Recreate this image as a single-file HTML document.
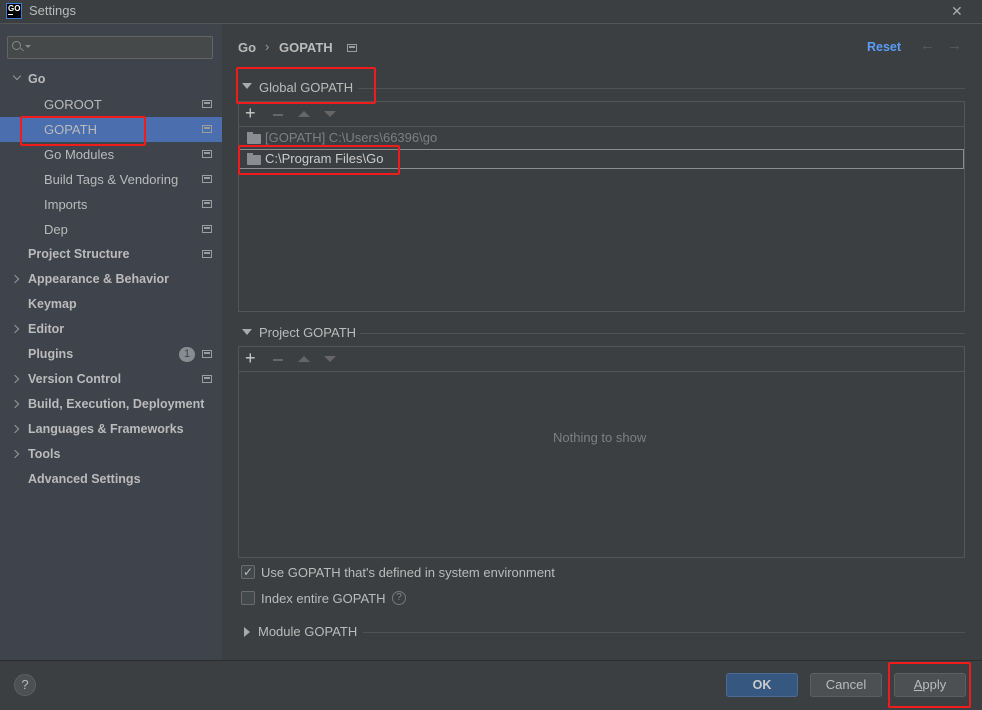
<!DOCTYPE html><html><head><style>
*{box-sizing:border-box;margin:0;padding:0}
body{width:982px;height:710px;background:#3c3f41;font-family:"Liberation Sans",sans-serif;color:#bbbbbb;font-size:13px;position:relative;overflow:hidden}
.a{position:absolute;white-space:nowrap}
.side{position:absolute;left:0;top:24px;width:222px;height:636px;background:#3e434c}
.it{position:absolute;height:25px;line-height:25px;font-size:13px}
.b{font-weight:bold;font-size:12.5px}
.ic{position:absolute;width:10px;height:8px;border:1px solid #9a9da0}
.ic:after{content:"";position:absolute;left:1px;top:1px;width:6px;height:2px;background:#9a9da0}
.chev{position:absolute;width:6px;height:6px;border-right:1.3px solid #999;border-bottom:1.3px solid #999;transform:rotate(-45deg)}
.red{position:absolute;border:2px solid #f01b1b;border-radius:2px}
.fold{position:absolute;width:14px;height:10px;background:#8a8e92;border-radius:1px}
.fold:before{content:"";position:absolute;left:0;top:-2px;width:6px;height:3px;background:#8a8e92}
.btn{position:absolute;height:24px;border:1px solid #5e6060;border-radius:3px;background:#4c5052;text-align:center;line-height:22px;color:#bbb}
</style></head><body>
<div class="a" style="left:0;top:0;width:982px;height:24px;background:#3c3f41;border-bottom:1px solid #555"></div>
<div class="a" style="left:6px;top:3px;width:16px;height:16px;background:#000;border:1px solid #3a7ad8;color:#fff;font-size:8px;font-weight:bold;line-height:9px;padding-left:1px">GO<div style="width:5px;height:1px;background:#fff;margin-top:1px"></div></div>
<div class="a" style="left:29px;top:3px;font-size:13px;color:#bbb">Settings</div>
<div class="a" style="left:951px;top:3px;font-size:14px;color:#aaa">✕</div>
<div class="side"></div>
<div class="a" style="left:7px;top:36px;width:206px;height:23px;border:1px solid #646464;background:#45494a;border-radius:2px"></div>
<div class="a" style="left:12px;top:41px;width:9px;height:9px;border:1.3px solid #888;border-radius:50%"></div>
<div class="a" style="left:20px;top:49px;width:4px;height:1.3px;background:#888;transform:rotate(45deg)"></div>
<div class="a" style="left:25px;top:45px;border-left:3px solid transparent;border-right:3px solid transparent;border-top:3px solid #888"></div>
<div class="chev" style="left:14px;top:73px;transform:rotate(45deg)"></div>
<div class="it b" style="left:28px;top:67px">Go</div>
<div class="it" style="left:44px;top:92px">GOROOT</div>
<div class="a" style="left:0;top:117px;width:222px;height:25px;background:#4b6eaf"></div>
<div class="it" style="left:44px;top:117px">GOPATH</div>
<div class="it" style="left:44px;top:142px">Go Modules</div>
<div class="it" style="left:44px;top:167px">Build Tags &amp; Vendoring</div>
<div class="it" style="left:44px;top:192px">Imports</div>
<div class="it" style="left:44px;top:217px">Dep</div>
<div class="it b" style="left:28px;top:242px">Project Structure</div>
<div class="it b" style="left:28px;top:267px">Appearance &amp; Behavior</div>
<div class="it b" style="left:28px;top:292px">Keymap</div>
<div class="it b" style="left:28px;top:317px">Editor</div>
<div class="it b" style="left:28px;top:342px">Plugins</div>
<div class="it b" style="left:28px;top:367px">Version Control</div>
<div class="it b" style="left:28px;top:392px">Build, Execution, Deployment</div>
<div class="it b" style="left:28px;top:417px">Languages &amp; Frameworks</div>
<div class="it b" style="left:28px;top:442px">Tools</div>
<div class="it b" style="left:28px;top:467px">Advanced Settings</div>
<div class="chev" style="left:12px;top:276px"></div>
<div class="chev" style="left:12px;top:326px"></div>
<div class="chev" style="left:12px;top:376px"></div>
<div class="chev" style="left:12px;top:401px"></div>
<div class="chev" style="left:12px;top:426px"></div>
<div class="chev" style="left:12px;top:451px"></div>
<div class="ic" style="left:202px;top:100px"></div>
<div class="ic" style="left:202px;top:125px"></div>
<div class="ic" style="left:202px;top:150px"></div>
<div class="ic" style="left:202px;top:175px"></div>
<div class="ic" style="left:202px;top:200px"></div>
<div class="ic" style="left:202px;top:225px"></div>
<div class="ic" style="left:202px;top:250px"></div>
<div class="ic" style="left:202px;top:350px"></div>
<div class="ic" style="left:202px;top:375px"></div>
<div class="a" style="left:179px;top:347px;width:16px;height:15px;border-radius:8px;background:#888c90;color:#3e434c;font-size:11px;text-align:center;line-height:15px">1</div>
<div class="red" style="left:20px;top:116px;width:126px;height:30px"></div>
<div class="a b" style="left:238px;top:40px;font-size:13px">Go</div>
<div class="a" style="left:265px;top:39px;color:#999">›</div>
<div class="a b" style="left:279px;top:40px;font-size:13px">GOPATH</div>
<div class="ic" style="left:347px;top:44px"></div>
<div class="a b" style="left:867px;top:40px;color:#589df6;font-size:12.5px">Reset</div>
<div class="a" style="left:920px;top:37px;color:#5a5d60;font-size:15px">←</div>
<div class="a" style="left:947px;top:37px;color:#5a5d60;font-size:15px">→</div>
<div class="a" style="left:242px;top:83px;width:0;height:0;border-left:5px solid transparent;border-right:5px solid transparent;border-top:6px solid #aaa"></div>
<div class="a" style="left:259px;top:80px">Global GOPATH</div>
<div class="a" style="left:358px;top:88px;width:607px;height:1px;background:#505254"></div>
<div class="a" style="left:238px;top:101px;width:727px;height:211px;border:1px solid #555"></div>
<div class="a" style="left:239px;top:126px;width:725px;height:1px;background:#555"></div>
<div class="a" style="left:245px;top:103px;font-size:18px;color:#ccc">+</div>
<div class="a" style="left:273px;top:114px;width:10px;height:1.5px;background:#666"></div>
<div class="a" style="left:298px;top:111px;border-left:6px solid transparent;border-right:6px solid transparent;border-bottom:6px solid #666"></div>
<div class="a" style="left:324px;top:111px;border-left:6px solid transparent;border-right:6px solid transparent;border-top:6px solid #666"></div>
<div class="fold" style="left:247px;top:134px"></div>
<div class="a" style="left:265px;top:130px;color:#7d7f82">[GOPATH] C:\Users\66396\go</div>
<div class="a" style="left:239px;top:149px;width:725px;height:20px;border:1px solid #8a8e92"></div>
<div class="fold" style="left:247px;top:155px"></div>
<div class="a" style="left:265px;top:151px;color:#ccc">C:\Program Files\Go</div>
<div class="red" style="left:236px;top:67px;width:140px;height:37px"></div>
<div class="red" style="left:238px;top:145px;width:162px;height:30px"></div>
<div class="a" style="left:242px;top:329px;border-left:5px solid transparent;border-right:5px solid transparent;border-top:6px solid #aaa"></div>
<div class="a" style="left:259px;top:325px">Project GOPATH</div>
<div class="a" style="left:360px;top:333px;width:605px;height:1px;background:#505254"></div>
<div class="a" style="left:238px;top:346px;width:727px;height:212px;border:1px solid #555"></div>
<div class="a" style="left:239px;top:371px;width:725px;height:1px;background:#555"></div>
<div class="a" style="left:245px;top:348px;font-size:18px;color:#ccc">+</div>
<div class="a" style="left:273px;top:359px;width:10px;height:1.5px;background:#666"></div>
<div class="a" style="left:298px;top:356px;border-left:6px solid transparent;border-right:6px solid transparent;border-bottom:6px solid #666"></div>
<div class="a" style="left:324px;top:356px;border-left:6px solid transparent;border-right:6px solid transparent;border-top:6px solid #666"></div>
<div class="a" style="left:553px;top:430px;color:#7d7f82">Nothing to show</div>
<div class="a" style="left:241px;top:565px;width:14px;height:14px;border:1px solid #6b6b6b;background:#43494a;border-radius:2px;color:#bbb;font-size:12px;line-height:12px;text-align:center">✓</div>
<div class="a" style="left:261px;top:565px">Use GOPATH that's defined in system environment</div>
<div class="a" style="left:241px;top:591px;width:14px;height:14px;border:1px solid #6b6b6b;background:#43494a;border-radius:2px"></div>
<div class="a" style="left:261px;top:591px">Index entire GOPATH</div>
<div class="a" style="left:392px;top:591px;width:14px;height:14px;border:1px solid #777;border-radius:50%;font-size:10px;text-align:center;line-height:12px;color:#888">?</div>
<div class="a" style="left:244px;top:627px;border-top:5px solid transparent;border-bottom:5px solid transparent;border-left:6px solid #aaa"></div>
<div class="a" style="left:258px;top:624px">Module GOPATH</div>
<div class="a" style="left:363px;top:632px;width:602px;height:1px;background:#505254"></div>
<div class="a" style="left:0;top:660px;width:982px;height:1px;background:#2b2b2b"></div>
<div class="a" style="left:14px;top:674px;width:22px;height:22px;border-radius:50%;background:#4c5052;border:1px solid #5e6060;text-align:center;line-height:20px;font-size:13px;color:#bbb">?</div>
<div class="btn b" style="left:726px;top:673px;width:72px;background:#365880;border-color:#4a6c94;color:#ccc">OK</div>
<div class="btn" style="left:810px;top:673px;width:72px">Cancel</div>
<div class="btn" style="left:894px;top:673px;width:72px"><u>A</u>pply</div>
<div class="red" style="left:888px;top:662px;width:83px;height:46px"></div>
</body></html>
